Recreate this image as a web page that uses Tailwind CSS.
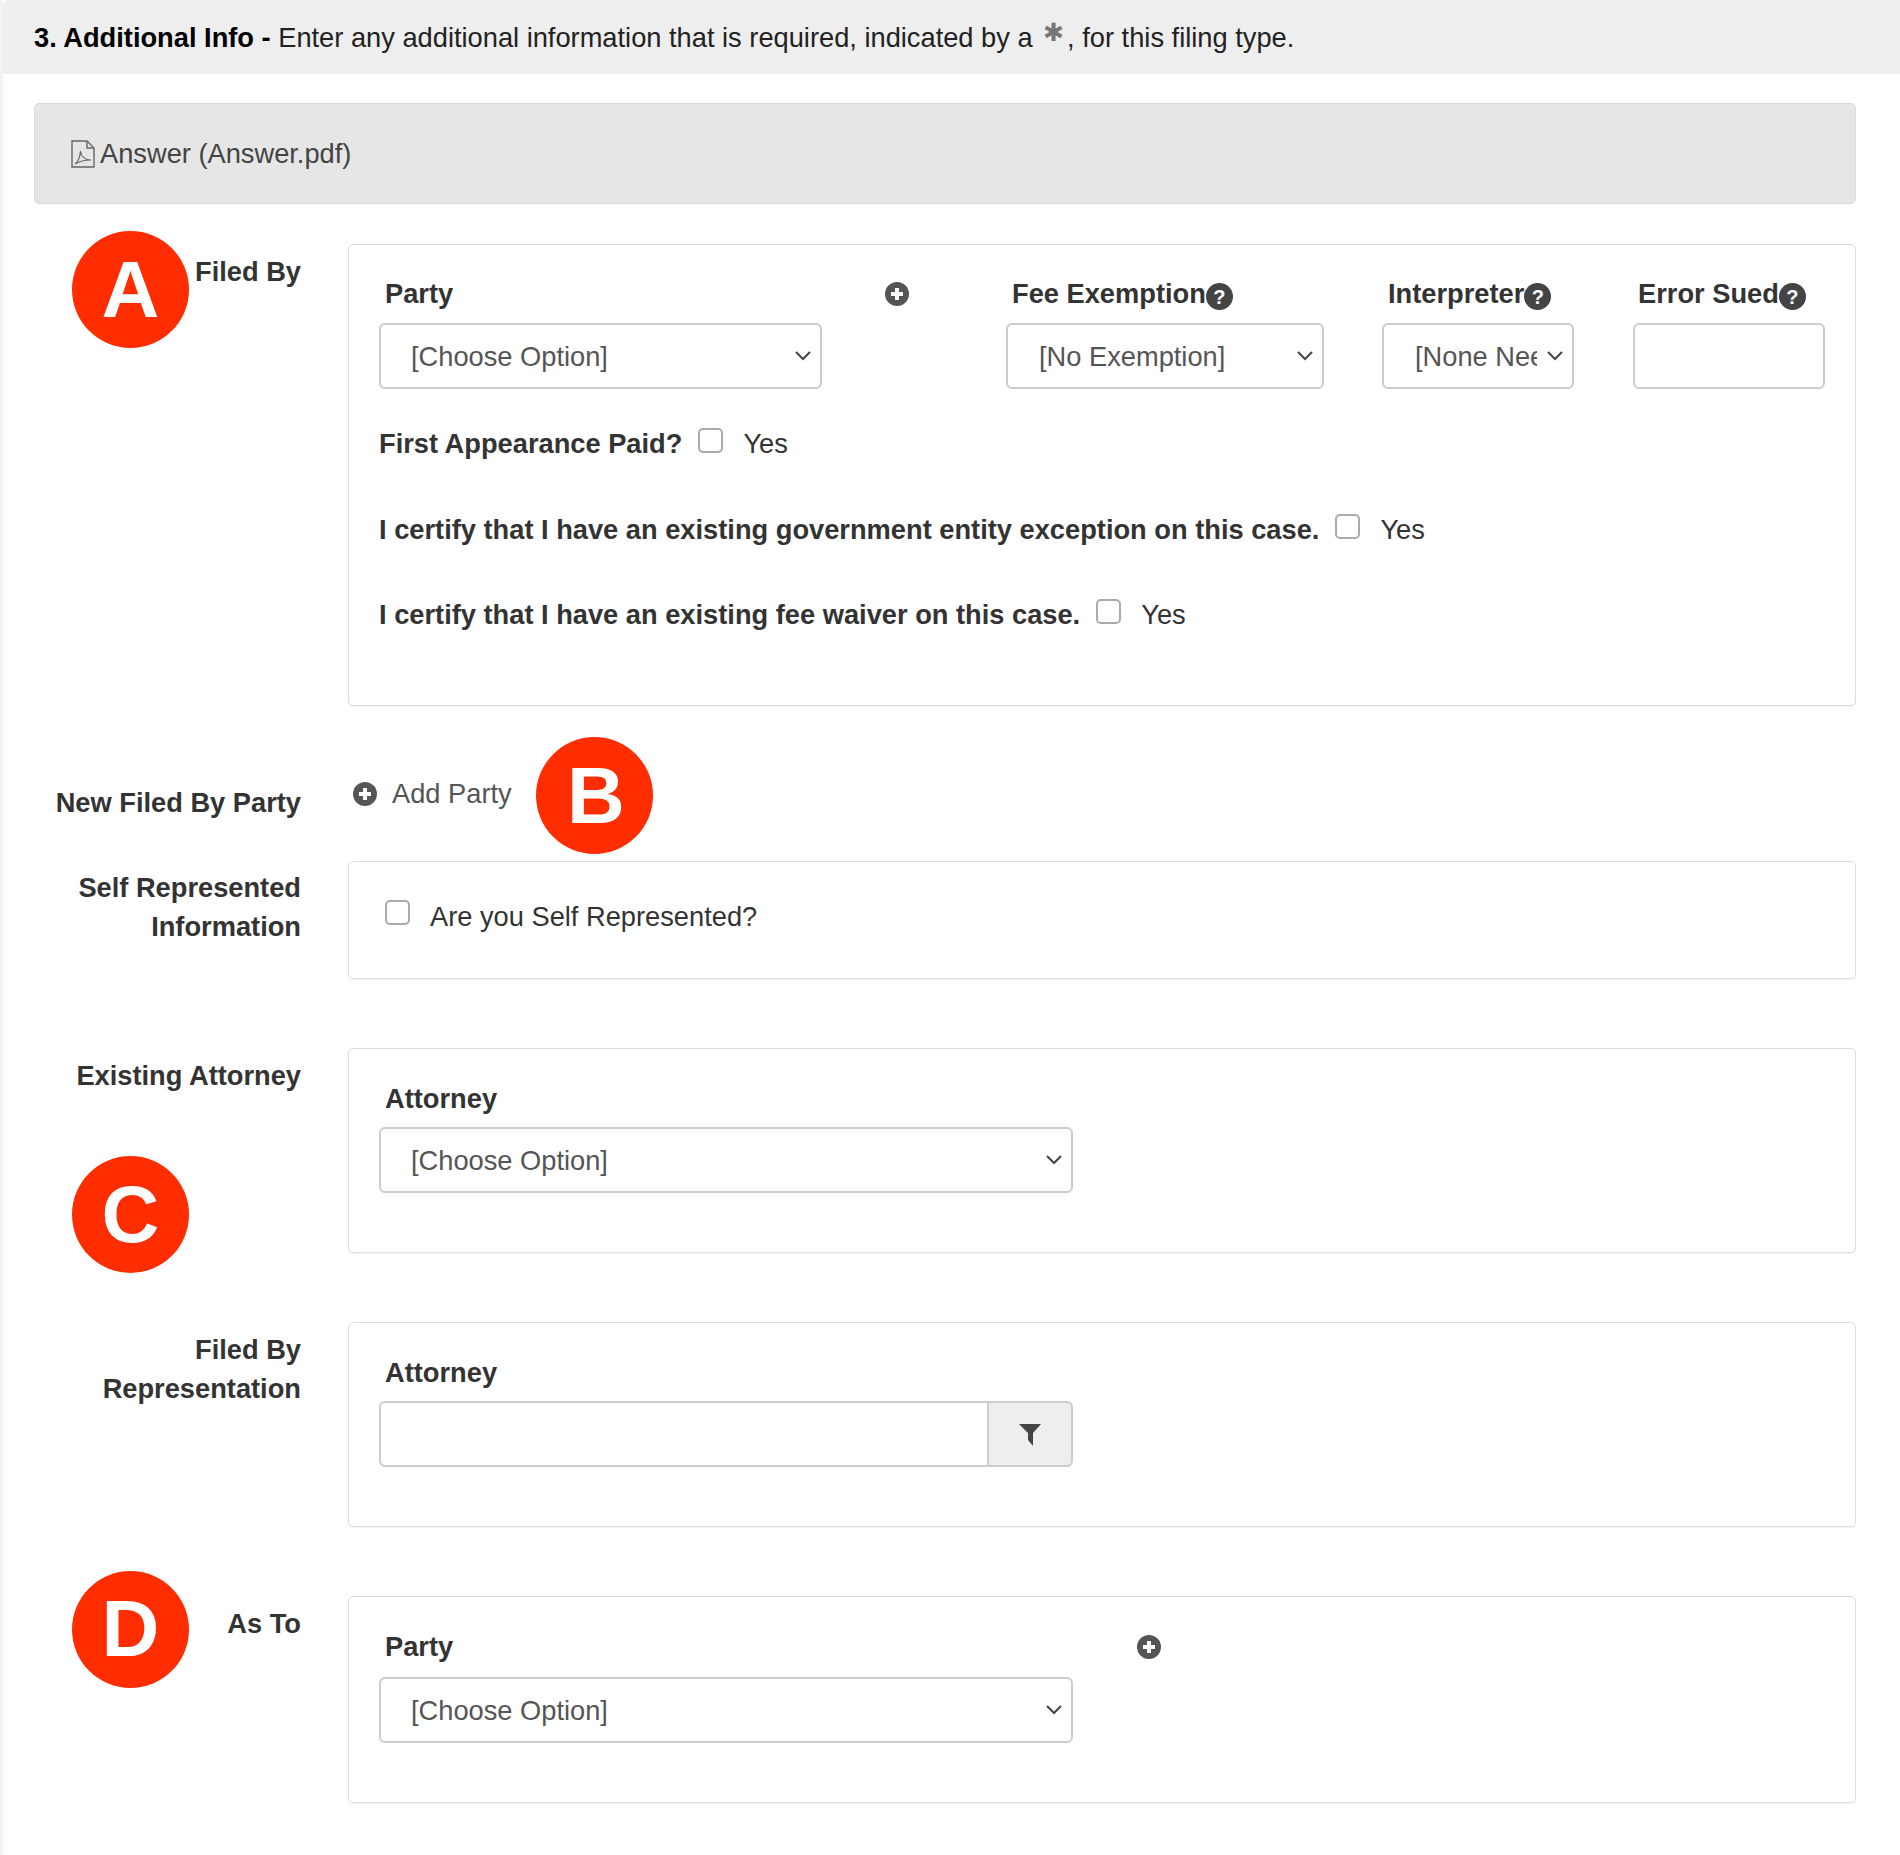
<!DOCTYPE html>
<html lang="en">
<head>
<meta charset="UTF-8" />
<title>Additional Info</title>
<script src="https://cdn.jsdelivr.net/npm/@tailwindcss/browser@4"></script>
</head>
<body class="bg-white font-['Liberation_Sans',Arial,sans-serif] text-[27.25px] leading-[39px] text-[#333]">
<div class="relative h-[1855px] w-[1900px] overflow-hidden border-l-[3px] border-[#f3f3f3]">

  <!-- header -->
  <div class="flex h-[74px] items-center rounded-tl-md bg-[#eeeeee] pl-[31px] text-[#222]">
    <p><b class="text-black">3. Additional Info - </b>Enter any additional information that is required, indicated by a <span class="relative top-[-6px] mx-[3px] font-['DejaVu_Sans'] text-[25px] leading-none text-[#777]">✱</span>, for this filing type.</p>
  </div>

  <div class="pl-[31px] pr-[41px]">
    <!-- document bar -->
    <div class="mt-[29px] flex h-[101px] w-[1822px] items-center rounded-[5px] border border-[#dadada] bg-[#e6e6e6] pl-[36px] text-[#444]">
      <svg class="mr-[5px] h-[28px] w-[24px]" viewBox="0 0 24 28" fill="none" stroke="#666" stroke-width="1.4">
        <path d="M1 1h15l7 7v19H1z" />
        <path d="M16 1v7h7" />
        <path d="M4 24c3-2 5-7 5.500-13 .5 5 4 9 10.500 9-5 0-11 1-16 4z" stroke-width="1.200" />
      </svg>
      <span>Answer (Answer.pdf)</span>
    </div>

    <!-- filed by -->
    <div class="mt-[40px] flex">
      <div class="w-[267px] shrink-0 pt-[8px] text-right font-bold">Filed By</div>
      <div class="ml-[47px] h-[462px] w-[1508px] rounded-[5px] border border-[#dcdcdc] pl-[30px] pt-[29px] shadow-[0_1px_2px_rgba(0,0,0,0.06)]">
        <div class="flex">
          <div class="w-[627px]">
            <div class="flex items-center font-bold">
              <span class="ml-[6px] w-[500px]">Party</span>
              <svg class="h-[24px] w-[24px]" viewBox="0 0 24 24"><circle cx="12" cy="12" r="12" fill="#555" /><path d="M12 6v12M6 12h12" stroke="#fff" stroke-width="4" /></svg>
            </div>
            <div class="relative mt-[10px] w-[443px]">
              <select class="h-[66px] w-full appearance-none rounded-[6px] border-2 border-[#cccccc] bg-white pl-[30px] pr-[40px] text-[#555]"><option>[Choose Option]</option></select>
              <svg class="absolute right-[11px] top-[28px] h-[10px] w-[16px]" viewBox="0 0 16 10" fill="none" stroke="#444" stroke-width="2"><path d="M1 1l7 7 7-7" /></svg>
            </div>
          </div>
          <div class="w-[376px]">
            <div class="flex items-center font-bold">
              <span class="ml-[6px]">Fee Exemption</span>
              <span class="relative top-[3px] flex h-[27px] w-[27px] items-center justify-center rounded-full bg-[#444] text-[20px] leading-none text-white">?</span>
            </div>
            <div class="relative mt-[10px] w-[318px]">
              <select class="h-[66px] w-full appearance-none rounded-[6px] border-2 border-[#cccccc] bg-white pl-[31px] pr-[40px] text-[#555]"><option>[No Exemption]</option></select>
              <svg class="absolute right-[11px] top-[28px] h-[10px] w-[16px]" viewBox="0 0 16 10" fill="none" stroke="#444" stroke-width="2"><path d="M1 1l7 7 7-7" /></svg>
            </div>
          </div>
          <div class="w-[251px]">
            <div class="flex items-center font-bold">
              <span class="ml-[6px]">Interpreter</span>
              <span class="relative top-[3px] flex h-[27px] w-[27px] items-center justify-center rounded-full bg-[#444] text-[20px] leading-none text-white">?</span>
            </div>
            <div class="relative mt-[10px] w-[192px]">
              <select class="h-[66px] w-full appearance-none rounded-[6px] border-2 border-[#cccccc] bg-white pl-[31px] pr-[35px] text-[#555]"><option>[None Needed]</option></select>
              <svg class="absolute right-[11px] top-[28px] h-[10px] w-[16px]" viewBox="0 0 16 10" fill="none" stroke="#444" stroke-width="2"><path d="M1 1l7 7 7-7" /></svg>
            </div>
          </div>
          <div class="w-[192px]">
            <div class="flex items-center font-bold">
              <span class="ml-[5px]">Error Sued</span>
              <span class="relative top-[3px] flex h-[27px] w-[27px] items-center justify-center rounded-full bg-[#444] text-[20px] leading-none text-white">?</span>
            </div>
            <input type="text" class="mt-[10px] h-[66px] w-full rounded-[6px] border-2 border-[#cccccc] bg-white" />
          </div>
        </div>
        <div class="mt-[35px] flex items-center">
          <b>First Appearance Paid?</b>
          <span class="relative top-[-3px] ml-[16px] h-[25px] w-[25px] rounded-[5px] border-2 border-[#aaaaaa] bg-white"></span>
          <span class="ml-[20px]">Yes</span>
        </div>
        <div class="mt-[47px] flex items-center">
          <b>I certify that I have an existing government entity exception on this case.</b>
          <span class="relative top-[-3px] ml-[16px] h-[25px] w-[25px] rounded-[5px] border-2 border-[#aaaaaa] bg-white"></span>
          <span class="ml-[20px]">Yes</span>
        </div>
        <div class="mt-[46px] flex items-center">
          <b>I certify that I have an existing fee waiver on this case.</b>
          <span class="relative top-[-3px] ml-[16px] h-[25px] w-[25px] rounded-[5px] border-2 border-[#aaaaaa] bg-white"></span>
          <span class="ml-[20px]">Yes</span>
        </div>
      </div>
    </div>

    <!-- new party -->
    <div class="mt-[68px] flex h-[87px]">
      <div class="w-[267px] shrink-0 pt-[9px] text-right font-bold">New Filed By Party</div>
      <div class="ml-[52px] flex h-[39px] items-center text-[#555]">
        <svg class="h-[24px] w-[24px]" viewBox="0 0 24 24"><circle cx="12" cy="12" r="12" fill="#555" /><path d="M12 6v12M6 12h12" stroke="#fff" stroke-width="4" /></svg>
        <span class="ml-[15px]">Add Party</span>
      </div>
    </div>

    <!-- self represented -->
    <div class="flex">
      <div class="w-[267px] shrink-0 pt-[7px] text-right font-bold">Self Represented<br />Information</div>
      <div class="ml-[47px] flex h-[118px] w-[1508px] items-center rounded-[5px] border border-[#dcdcdc] pb-[7px] pl-[36px] shadow-[0_1px_2px_rgba(0,0,0,0.06)]">
        <span class="relative top-[-4px] h-[25px] w-[25px] rounded-[5px] border-2 border-[#aaaaaa] bg-white"></span>
        <span class="ml-[20px]">Are you Self Represented?</span>
      </div>
    </div>

    <!-- existing attorney -->
    <div class="mt-[69px] flex">
      <div class="w-[267px] shrink-0 pt-[8px] text-right font-bold">Existing Attorney</div>
      <div class="ml-[47px] h-[205px] w-[1508px] rounded-[5px] border border-[#dcdcdc] pl-[30px] pt-[30px] shadow-[0_1px_2px_rgba(0,0,0,0.06)]">
        <div class="ml-[6px] font-bold">Attorney</div>
        <div class="relative mt-[9px] w-[694px]">
          <select class="h-[66px] w-full appearance-none rounded-[6px] border-2 border-[#cccccc] bg-white pl-[30px] pr-[40px] text-[#555]"><option>[Choose Option]</option></select>
          <svg class="absolute right-[11px] top-[28px] h-[10px] w-[16px]" viewBox="0 0 16 10" fill="none" stroke="#444" stroke-width="2"><path d="M1 1l7 7 7-7" /></svg>
        </div>
      </div>
    </div>

    <!-- filed by representation -->
    <div class="mt-[69px] flex">
      <div class="w-[267px] shrink-0 pt-[8px] text-right font-bold">Filed By<br />Representation</div>
      <div class="ml-[47px] h-[205px] w-[1508px] rounded-[5px] border border-[#dcdcdc] pl-[30px] pt-[30px] shadow-[0_1px_2px_rgba(0,0,0,0.06)]">
        <div class="ml-[6px] font-bold">Attorney</div>
        <div class="mt-[9px] flex h-[66px] w-[694px]">
          <input type="text" class="h-full w-[610px] rounded-l-[6px] border-2 border-[#cccccc] bg-white" />
          <div class="flex h-full w-[84px] items-center justify-center rounded-r-[6px] border-2 border-l-0 border-[#cccccc] bg-[#eeeeee]">
            <svg class="relative top-[1px] h-[22px] w-[22px]" viewBox="0 0 22 22" fill="#444"><path d="M0 0h22l-8 9v13l-5-6V9z" /></svg>
          </div>
        </div>
      </div>
    </div>

    <!-- as to -->
    <div class="mt-[69px] flex">
      <div class="w-[267px] shrink-0 pt-[8px] text-right font-bold">As To</div>
      <div class="ml-[47px] h-[207px] w-[1508px] rounded-[5px] border border-[#dcdcdc] pl-[30px] pt-[30px] shadow-[0_1px_2px_rgba(0,0,0,0.06)]">
        <div class="flex items-center font-bold">
          <span class="ml-[6px] w-[752px]">Party</span>
          <svg class="h-[24px] w-[24px]" viewBox="0 0 24 24"><circle cx="12" cy="12" r="12" fill="#555" /><path d="M12 6v12M6 12h12" stroke="#fff" stroke-width="4" /></svg>
        </div>
        <div class="relative mt-[11px] w-[694px]">
          <select class="h-[66px] w-full appearance-none rounded-[6px] border-2 border-[#cccccc] bg-white pl-[30px] pr-[40px] text-[#555]"><option>[Choose Option]</option></select>
          <svg class="absolute right-[11px] top-[28px] h-[10px] w-[16px]" viewBox="0 0 16 10" fill="none" stroke="#444" stroke-width="2"><path d="M1 1l7 7 7-7" /></svg>
        </div>
      </div>
    </div>
  </div>

  <!-- callout badges -->
  <div class="absolute left-[69px] top-[231px] flex h-[117px] w-[117px] items-center justify-center rounded-full bg-[#ff2d00] text-[80px] font-bold leading-none text-white">A</div>
  <div class="absolute left-[533px] top-[737px] flex h-[117px] w-[117px] items-center justify-center rounded-full bg-[#ff2d00] pl-[3px] text-[80px] font-bold leading-none text-white">B</div>
  <div class="absolute left-[69px] top-[1156px] flex h-[117px] w-[117px] items-center justify-center rounded-full bg-[#ff2d00] text-[80px] font-bold leading-none text-white">C</div>
  <div class="absolute left-[69px] top-[1571px] flex h-[117px] w-[117px] items-center justify-center rounded-full bg-[#ff2d00] pb-[2px] text-[80px] font-bold leading-none text-white">D</div>
</div>
</body>
</html>
